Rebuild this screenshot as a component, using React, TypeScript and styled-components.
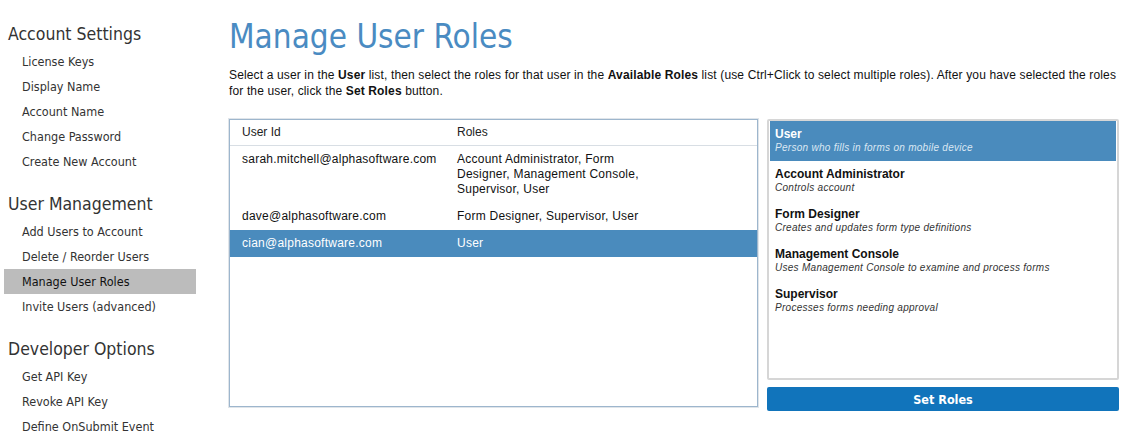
import React from "react";
import styled, { createGlobalStyle } from "styled-components";

const Global = createGlobalStyle`
  html, body { margin: 0; padding: 0; background: #fff; }
  body { font-family: "Liberation Sans", Arial, sans-serif; color: #111; }
`;

const Page = styled.div`
  display: flex;
  width: 1140px;
  height: 440px;
  overflow: hidden;
`;

const Sidebar = styled.nav`
  width: 196px;
  flex: none;
  padding-top: 22px;
  font-family: "DejaVu Sans Condensed", "DejaVu Sans", Tahoma, sans-serif;
  font-stretch: condensed;
`;

const Section = styled.div`
  margin-bottom: 18px;
`;

const SectionTitle = styled.div`
  font-size: 17.5px;
  color: #333;
  padding-left: 8px;
  height: 24px;
  line-height: 24px;
  margin-bottom: 3px;
`;

const NavItem = styled.div<{ $active?: boolean }>`
  font-size: 12.5px;
  margin-left: 4px;
  padding-left: 18px;
  height: 25px;
  line-height: 25px;
  background: ${(p) => (p.$active ? "#bcbcbc" : "transparent")};
  color: ${(p) => (p.$active ? "#111" : "#333")};
`;

const Main = styled.main`
  flex: 1;
  padding-left: 33px;
  padding-top: 16px;
  padding-right: 21px;
`;

const Title = styled.h1`
  margin: 0;
  font-family: "DejaVu Sans Condensed", "DejaVu Sans", Tahoma, sans-serif;
  font-stretch: condensed;
  font-weight: normal;
  font-size: 33px;
  line-height: 42px;
  color: #4a8bc2;
`;

const Intro = styled.p`
  margin: 9px 0 0;
  font-size: 12px;
  line-height: 16px;
  letter-spacing: 0.14px;
  color: #111;
  b { font-weight: bold; }
`;

const Panels = styled.div`
  display: flex;
  gap: 9px;
  margin-top: 20px;
  align-items: flex-start;
`;

const UserBox = styled.div`
  width: 527px;
  height: 286px;
  border: 1px solid #9db6cd;
  box-shadow: 0 0 0 1px #e0e5ea;
  background: #fff;
`;

const Grid = styled.div`
  display: grid;
  grid-template-columns: 215px 1fr;
`;

const HeadCell = styled.div`
  font-size: 12px;
  line-height: 15px;
  padding: 5px 12px 5px;
  border-bottom: 1px solid #d8dee4;
  color: #222;
`;

const Row = styled.div<{ $selected?: boolean }>`
  display: contents;
  & > div {
    background: ${(p) => (p.$selected ? "#4a8bbd" : "transparent")};
    color: ${(p) => (p.$selected ? "#fff" : "#111")};
  }
`;

const Cell = styled.div`
  font-size: 12px;
  line-height: 15px;
  letter-spacing: 0.24px;
  padding: 6px 12px 6px;
`;

const RolesCell = styled(Cell)`
  padding-right: 100px;
`;

const RoleCol = styled.div`
  width: 352px;
  display: flex;
  flex-direction: column;
  gap: 7px;
`;

const RoleList = styled.div`
  height: 257px;
  border: 2px solid #d6d6d6;
  border-radius: 2px;
  background: #fff;
  padding: 0 1px;
`;

const RoleItem = styled.div<{ $selected?: boolean }>`
  height: 40px;
  padding: 6px 0 0 5px;
  box-sizing: border-box;
  background: ${(p) => (p.$selected ? "#4a8bbd" : "transparent")};
  color: ${(p) => (p.$selected ? "#fff" : "#111")};
`;

const RoleName = styled.div`
  font-weight: bold;
  font-size: 12px;
  line-height: 14px;
`;

const RoleDesc = styled.div<{ $selected?: boolean }>`
  font-style: italic;
  font-size: 10px;
  line-height: 13px;
  letter-spacing: 0.28px;
  color: ${(p) => (p.$selected ? "#dbe8f3" : "#333")};
`;

const Button = styled.button`
  height: 24px;
  width: 352px;
  border: none;
  border-radius: 2px;
  background: #1174bb;
  color: #fff;
  font-family: "DejaVu Sans Condensed", "DejaVu Sans", Tahoma, sans-serif;
  font-stretch: condensed;
  font-weight: bold;
  font-size: 12.5px;
  cursor: pointer;
  padding: 0;
`;

const users = [
  { id: "sarah.mitchell@alphasoftware.com", roles: "Account Administrator, Form Designer, Management Console, Supervisor, User" },
  { id: "dave@alphasoftware.com", roles: "Form Designer, Supervisor, User" },
  { id: "cian@alphasoftware.com", roles: "User", selected: true },
];

const roles = [
  { name: "User", desc: "Person who fills in forms on mobile device", selected: true },
  { name: "Account Administrator", desc: "Controls account" },
  { name: "Form Designer", desc: "Creates and updates form type definitions" },
  { name: "Management Console", desc: "Uses Management Console to examine and process forms" },
  { name: "Supervisor", desc: "Processes forms needing approval" },
];

const nav = [
  { title: "Account Settings", items: ["License Keys", "Display Name", "Account Name", "Change Password", "Create New Account"] },
  { title: "User Management", items: ["Add Users to Account", "Delete / Reorder Users", "Manage User Roles", "Invite Users (advanced)"] },
  { title: "Developer Options", items: ["Get API Key", "Revoke API Key", "Define OnSubmit Event"] },
];

export default function App() {
  return (
    <>
      <Global />
      <Page>
        <Sidebar>
          {nav.map((s) => (
            <Section key={s.title}>
              <SectionTitle>{s.title}</SectionTitle>
              {s.items.map((i) => (
                <NavItem key={i} $active={i === "Manage User Roles"}>{i}</NavItem>
              ))}
            </Section>
          ))}
        </Sidebar>
        <Main>
          <Title>Manage User Roles</Title>
          <Intro>
            Select a user in the <b>User</b> list, then select the roles for that user in the <b>Available Roles</b> list (use Ctrl+Click to select multiple roles). After you have selected the roles for the user, click the <b>Set Roles</b> button.
          </Intro>
          <Panels>
            <UserBox>
              <Grid>
                <HeadCell>User Id</HeadCell>
                <HeadCell>Roles</HeadCell>
                {users.map((u) => (
                  <Row key={u.id} $selected={u.selected}>
                    <Cell>{u.id}</Cell>
                    <RolesCell>{u.roles}</RolesCell>
                  </Row>
                ))}
              </Grid>
            </UserBox>
            <RoleCol>
              <RoleList>
                {roles.map((r) => (
                  <RoleItem key={r.name} $selected={r.selected}>
                    <RoleName>{r.name}</RoleName>
                    <RoleDesc $selected={r.selected}>{r.desc}</RoleDesc>
                  </RoleItem>
                ))}
              </RoleList>
              <Button>Set Roles</Button>
            </RoleCol>
          </Panels>
        </Main>
      </Page>
    </>
  );
}
